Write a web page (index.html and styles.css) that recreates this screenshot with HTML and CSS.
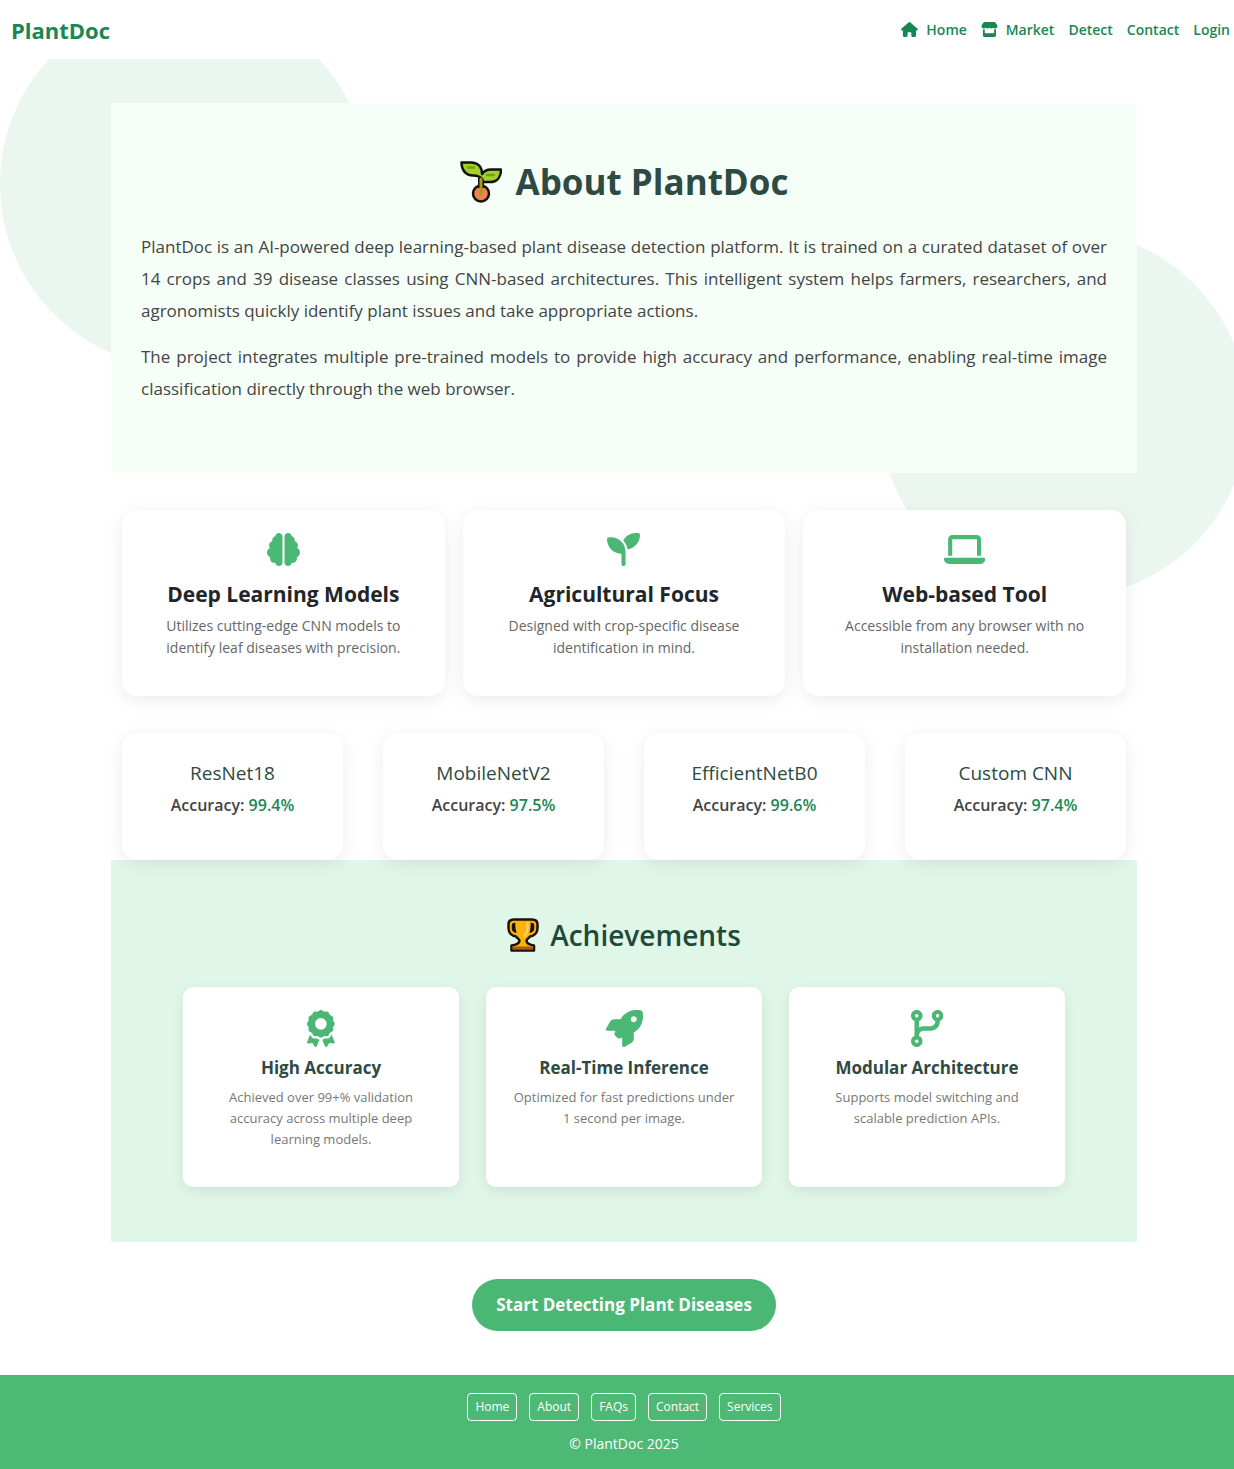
FILE: index.html
```html
<!DOCTYPE html>
<html lang="en">
<head>
<meta charset="utf-8">
<meta name="viewport" content="width=device-width, initial-scale=1">
<title>About - PlantDoc</title>
<link rel="stylesheet" href="styles.css">
</head>
<body>
<div class="blob blob-left"></div>
<div class="blob blob-right"></div>

<header class="navbar">
  <a class="brand" href="#">PlantDoc</a>
  <nav class="nav-links" aria-label="Main">
    <a href="#"><svg class="nav-icon" viewBox="0 0 576 512" aria-hidden="true"><path d="M575.8 255.5c0 18-15 32.1-32 32.1h-32l.7 160.2c0 2.7-.2 5.4-.5 8.1V472c0 22.1-17.9 40-40 40H456c-1.1 0-2.2 0-3.3-.1c-1.4 .1-2.8 .1-4.2 .1H416 392c-22.1 0-40-17.9-40-40V448 384c0-17.7-14.3-32-32-32H256c-17.7 0-32 14.3-32 32v64 24c0 22.1-17.9 40-40 40H160 128.1c-1.5 0-3-.1-4.5-.2c-1.2 .1-2.4 .2-3.6 .2H104c-22.1 0-40-17.9-40-40V360c0-.9 0-1.9 .1-2.8V287.6H32c-18 0-32-14-32-32.1c0-9 3-17 10-24L266.4 8c7-7 15-8 22-8s15 2 21 7L564.8 231.5c8 7 12 15 11 24z"/></svg>Home</a>
    <a href="#"><svg class="nav-icon" viewBox="0 0 576 512" aria-hidden="true"><path d="M547.6 103.8L490.3 13.1C485.2 5 476.1 0 466.4 0H109.6C99.9 0 90.8 5 85.7 13.1L28.3 103.8c-29.6 46.8-3.4 111.9 51.9 119.4c4 .5 8.1 .8 12.1 .8c26.1 0 49.3-11.4 65.2-29c15.9 17.6 39.1 29 65.2 29c26.1 0 49.3-11.4 65.2-29c15.9 17.6 39.1 29 65.2 29c26.2 0 49.3-11.4 65.2-29c16 17.6 39.1 29 65.2 29c4.1 0 8.1-.3 12.1-.8c55.5-7.4 81.8-72.5 52.1-119.4zM499.7 254.9l-.1 0c-5.3 .7-10.7 1.1-16.2 1.1c-12.4 0-24.3-1.9-35.4-5.3V384H128V250.6c-11.2 3.5-23.2 5.4-35.6 5.4c-5.5 0-11-.4-16.3-1.1l-.1 0c-4.1-.6-8.1-1.3-12-2.3V384v64c0 35.3 28.7 64 64 64H448c35.3 0 64-28.7 64-64V384 252.6c-4 1-8 1.8-12.3 2.3z"/></svg>Market</a>
    <a href="#">Detect</a>
    <a href="#">Contact</a>
    <a href="#">Login</a>
  </nav>
</header>

<main class="content">
  <section class="about">
    <h1><svg class="emoji-seedling" viewBox="0 0 42 42" aria-hidden="true">
      <circle cx="21" cy="32.500" r="8" fill="#f0834e" stroke="#111" stroke-width="2.500"/>
      <path d="M21 27V17" stroke="#111" stroke-width="6" fill="none"/>
      <path d="M1.500 1.500H11C18 1.500 22 6 22 13C24 10 27 8.500 31 8.500H41C41 16 37 21 30 21H22.500V18.500C20 15 16 14.500 13 14.500C6 14.500 1.500 9 1.500 1.500Z" fill="#a5cf2a" stroke="#111" stroke-width="2.500" stroke-linejoin="round"/>
      <path d="M21 33V18" stroke="#a99a1e" stroke-width="3" stroke-linecap="round" fill="none"/>
      <path d="M8 6.500H14M27 14H34" stroke="#6ea315" stroke-width="2.500" stroke-linecap="round" fill="none"/>
    </svg>About PlantDoc</h1>
    <p>PlantDoc is an AI-powered deep learning-based plant disease detection platform. It is trained on a curated dataset of over 14 crops and 39 disease classes using CNN-based architectures. This intelligent system helps farmers, researchers, and agronomists quickly identify plant issues and take appropriate actions.</p>
    <p>The project integrates multiple pre-trained models to provide high accuracy and performance, enabling real-time image classification directly through the web browser.</p>
  </section>

  <section class="features">
    <article class="feature-card">
      <svg class="feature-icon" viewBox="0 0 512 512" aria-hidden="true"><path d="M184 0c30.900 0 56 25.100 56 56V456c0 30.900-25.100 56-56 56c-28.900 0-52.700-21.900-55.700-50.100c-5.200 1.400-10.700 2.100-16.300 2.100c-35.300 0-64-28.700-64-64c0-7.400 1.300-14.600 3.600-21.200C21.400 367.400 0 338.200 0 304c0-31.900 18.700-59.500 45.800-72.300C37.100 220.800 32 207 32 192c0-30.700 21.600-56.300 50.400-62.600C80.800 123.900 80 118 80 112c0-29.900 20.600-55.100 48.300-62.100C131.300 21.900 155.100 0 184 0zM328 0c28.900 0 52.600 21.900 55.700 49.900c27.800 7 48.300 32.100 48.300 62.100c0 6-.8 11.900-2.400 17.400c28.800 6.200 50.400 31.900 50.400 62.600c0 15-5.100 28.800-13.800 39.700C493.300 244.500 512 272.100 512 304c0 34.200-21.400 63.400-51.600 74.800c2.300 6.600 3.600 13.800 3.600 21.200c0 35.300-28.700 64-64 64c-5.600 0-11.100-.7-16.300-2.100c-3 28.200-26.800 50.100-55.700 50.100c-30.900 0-56-25.100-56-56V56c0-30.900 25.100-56 56-56z"/></svg>
      <h2>Deep Learning Models</h2>
      <p>Utilizes cutting-edge CNN models to identify leaf diseases with precision.</p>
    </article>
    <article class="feature-card">
      <svg class="feature-icon" viewBox="0 0 512 512" aria-hidden="true"><path d="M512 32c0 113.600-84.600 207.500-194.200 222c-7.100-53.400-30.600-101.600-65.300-139.300C290.800 46.300 364 0 448 0h32c17.700 0 32 14.300 32 32zM0 96C0 78.300 14.300 64 32 64H64c123.700 0 224 100.300 224 224v32V480c0 17.700-14.300 32-32 32s-32-14.300-32-32V320C100.300 320 0 219.700 0 96z"/></svg>
      <h2>Agricultural Focus</h2>
      <p>Designed with crop-specific disease identification in mind.</p>
    </article>
    <article class="feature-card">
      <svg class="feature-icon" viewBox="0 0 640 512" aria-hidden="true"><path d="M128 32C92.700 32 64 60.700 64 96V352h64V96H512V352h64V96c0-35.300-28.700-64-64-64H128zM19.200 384C8.600 384 0 392.600 0 403.200C0 445.600 34.400 480 76.800 480H563.200c42.400 0 76.800-34.400 76.800-76.800c0-10.600-8.600-19.200-19.200-19.200H19.200z"/></svg>
      <h2>Web-based Tool</h2>
      <p>Accessible from any browser with no installation needed.</p>
    </article>
  </section>

  <section class="models">
    <article class="model-card"><h3>ResNet18</h3><p>Accuracy: <strong>99.4%</strong></p></article>
    <article class="model-card"><h3>MobileNetV2</h3><p>Accuracy: <strong>97.5%</strong></p></article>
    <article class="model-card"><h3>EfficientNetB0</h3><p>Accuracy: <strong>99.6%</strong></p></article>
    <article class="model-card"><h3>Custom CNN</h3><p>Accuracy: <strong>97.4%</strong></p></article>
  </section>

  <section class="achievements">
    <h2><svg class="emoji-trophy" viewBox="0 0 32 34" aria-hidden="true">
      <path d="M7 1.500H25C29 1.500 30.500 3.500 30.500 6.500V10C30.500 15 27 18 23 18.500C21.500 20.500 19.500 21.500 19.500 22.500C19.500 25 21 26.500 27 27.500V32.500H4.500V27.500C11 26.500 12.500 25 12.500 22.500C12.500 21.500 10.500 20.500 9 18.500C5 18 1.500 15 1.500 10V6.500C1.500 3.500 3 1.500 7 1.500Z" fill="#fbb10e" stroke="#1b1108" stroke-width="2.500" stroke-linejoin="round"/>
      <path d="M7.500 5.500C6 5.500 5.500 6 5.500 7.500V10C5.500 12 6.500 13.500 8.500 14C7.800 11 7.500 8 7.500 5.500ZM24.500 5.500C26 5.500 26.500 6 26.500 7.500V10C26.500 12 25.500 13.500 23.500 14C24.200 11 24.500 8 24.500 5.500Z" fill="#1b1108" stroke="#1b1108" stroke-width="1.500"/>
      <path d="M20.500 4V11C20.500 14 19.500 16 17 18.500" stroke="#ffd152" stroke-width="2.500" fill="none"/>
      <path d="M5.500 28.500H26V31.500H5.500Z" fill="#a65b1b"/>
    </svg>Achievements</h2>
    <div class="achievement-list">
      <article class="achievement-card">
        <svg class="achievement-icon" viewBox="0 0 384 512" aria-hidden="true"><path d="M173.800 5.500c11-7.300 25.400-7.300 36.400 0L228 17.200c6 3.900 13 5.800 20.100 5.400l21.300-1.300c13.200-.8 25.600 6.400 31.500 18.200l9.600 19.100c3.200 6.400 8.400 11.500 14.700 14.700L344.500 83c11.800 5.900 19 18.300 18.200 31.500l-1.300 21.300c-.4 7.100 1.500 14.200 5.400 20.100l11.800 17.800c7.300 11 7.300 25.400 0 36.400L366.800 228c-3.900 6-5.800 13-5.400 20.100l1.300 21.300c.8 13.200-6.400 25.600-18.200 31.500l-19.100 9.600c-6.400 3.200-11.500 8.400-14.700 14.700L301 344.500c-5.900 11.800-18.300 19-31.500 18.200l-21.300-1.300c-7.100-.4-14.200 1.500-20.100 5.400l-17.800 11.800c-11 7.300-25.400 7.300-36.400 0L156 366.800c-6-3.900-13-5.800-20.100-5.400l-21.300 1.300c-13.200 .8-25.600-6.400-31.500-18.200l-9.600-19.100c-3.200-6.400-8.400-11.500-14.700-14.700L39.500 301c-11.800-5.900-19-18.300-18.200-31.500l1.300-21.300c.4-7.100-1.500-14.200-5.400-20.100L5.500 210.200c-7.300-11-7.300-25.400 0-36.400L17.200 156c3.900-6 5.800-13 5.400-20.100l-1.300-21.300c-.8-13.200 6.400-25.600 18.200-31.500l19.100-9.600C65 70.200 70.200 65 73.400 58.600L83 39.500c5.900-11.800 18.300-19 31.500-18.200l21.300 1.300c7.100 .4 14.200-1.500 20.100-5.400L173.800 5.500zM272 192a80 80 0 1 0 -160 0 80 80 0 1 0 160 0zM1.300 441.800L44.400 339.300c.2 .1 .3 .2 .4 .4l9.600 19.100c11.700 23.200 36 37.300 62 35.800l21.300-1.300c.2 0 .5 0 .7 .2l17.800 11.800c5.100 3.300 10.500 5.900 16.100 7.700l-37.600 89.300c-2.300 5.500-7.400 9.200-13.300 9.700s-11.600-2.200-14.800-7.200L74.400 455.500l-56.100 8.300c-5.700 .8-11.400-1.500-15-6s-4.300-10.700-2.100-16zm248 60.400L211.700 413c5.600-1.800 11-4.300 16.100-7.700l17.800-11.800c.2-.1 .4-.2 .7-.2l21.300 1.300c26 1.500 50.300-12.600 62-35.800l9.600-19.100c.1-.2 .2-.3 .4-.4l43.200 102.500c2.200 5.300 1.400 11.400-2.100 16s-9.300 6.900-15 6l-56.100-8.300-32.200 49.200c-3.200 5-8.900 7.700-14.800 7.200s-11-4.300-13.300-9.700z"/></svg>
        <h3>High Accuracy</h3>
        <p>Achieved over 99+% validation accuracy across multiple deep learning models.</p>
      </article>
      <article class="achievement-card">
        <svg class="achievement-icon" viewBox="0 0 512 512" aria-hidden="true"><path d="M156.600 384.900L125.700 354c-8.500-8.500-11.500-20.800-7.700-32.200c3-8.900 7-20.500 11.800-33.800L24 288c-8.600 0-16.600-4.600-20.900-12.100s-4.200-16.700 .2-24.100l52.500-88.500c13-21.900 36.500-35.300 61.900-35.300l82.300 0c2.400-4 4.800-7.700 7.200-11.300C289.100-4.100 411.100-8.100 483.900 5.300c11.600 2.100 20.600 11.200 22.800 22.800c13.400 72.900 9.300 194.800-111.400 276.700c-3.500 2.400-7.300 4.800-11.300 7.200v82.300c0 25.400-13.400 49-35.300 61.900l-88.500 52.500c-7.400 4.400-16.600 4.500-24.100 .2s-12.100-12.200-12.100-20.900V380.800c-14.100 4.900-26.400 8.900-35.700 11.900c-11.200 3.600-23.400 .5-31.800-7.800zM384 168a40 40 0 1 0 0-80 40 40 0 1 0 0 80z"/></svg>
        <h3>Real-Time Inference</h3>
        <p>Optimized for fast predictions under 1 second per image.</p>
      </article>
      <article class="achievement-card">
        <svg class="achievement-icon" viewBox="0 0 448 512" aria-hidden="true"><path d="M80 104a24 24 0 1 0 0-48 24 24 0 1 0 0 48zm80-24c0 32.800-19.700 61-48 73.300v87.800c18.800-10.900 40.700-17.100 64-17.100h96c35.300 0 64-28.700 64-64v-6.700C307.700 141 288 112.800 288 80c0-44.200 35.800-80 80-80s80 35.800 80 80c0 32.800-19.700 61-48 73.300V160c0 70.700-57.300 128-128 128H176c-35.300 0-64 28.700-64 64v6.700c28.300 12.300 48 40.500 48 73.300c0 44.200-35.800 80-80 80s-80-35.800-80-80c0-32.800 19.700-61 48-73.300V352 153.300C19.700 141 0 112.800 0 80C0 35.800 35.800 0 80 0s80 35.800 80 80zm232 0a24 24 0 1 0 -48 0 24 24 0 1 0 48 0zM80 456a24 24 0 1 0 0-48 24 24 0 1 0 0 48z"/></svg>
        <h3>Modular Architecture</h3>
        <p>Supports model switching and scalable prediction APIs.</p>
      </article>
    </div>
  </section>

  <div class="cta">
    <a class="cta-button" href="#">Start Detecting Plant Diseases</a>
  </div>
</main>

<footer class="footer">
  <nav class="footer-links" aria-label="Footer">
    <a href="#">Home</a>
    <a href="#">About</a>
    <a href="#">FAQs</a>
    <a href="#">Contact</a>
    <a href="#">Services</a>
  </nav>
  <p>© PlantDoc 2025</p>
</footer>
</body>
</html>
```
FILE: styles.css
```css
* {
  box-sizing: border-box;
  margin: 0;
}

body {
  position: relative;
  overflow-x: hidden;
  background: #fff;
  color: #212529;
  font-family: "Open Sans", "Noto Sans", sans-serif;
  font-size: 15px;
  line-height: 22px;
}

a {
  color: inherit;
  text-decoration: none;
}

/* Background circles */
.blob {
  position: absolute;
  z-index: -1;
  width: 368px;
  height: 368px;
  border-radius: 50%;
  background: #ebf6f0;
}

.blob-left {
  top: 0;
  left: 0;
}

.blob-right {
  top: 230px;
  right: -14px;
}

/* Top bar */
.navbar {
  display: flex;
  align-items: center;
  justify-content: space-between;
  height: 59px;
  padding: 0 4px 0 11px;
  background: #fff;
  color: #198754;
}

.brand {
  font-size: 22px;
  font-weight: 700;
  line-height: 32px;
}

.nav-links {
  display: flex;
  gap: 14px;
  font-size: 14px;
  font-weight: 600;
}

.nav-links a {
  display: flex;
  align-items: center;
  gap: 8px;
}

.nav-icon {
  height: 15px;
  fill: currentColor;
}

/* Main column */
.content {
  padding: 44px 97px 44px 111px;
}

.about {
  padding: 54px 30px;
  background: #f5fff8;
}

.about h1 {
  display: flex;
  align-items: center;
  justify-content: center;
  gap: 14px;
  margin-bottom: 24px;
  color: #2d4a43;
  font-size: 35px;
  line-height: 50px;
}

.emoji-seedling {
  width: 42px;
  height: 42px;
}

.about p {
  margin-bottom: 14px;
  color: #444;
  font-size: 17px;
  line-height: 32px;
  text-align: justify;
}

/* Feature cards */
.features {
  display: grid;
  grid-template-columns: repeat(3, 1fr);
  gap: 18px;
  padding: 37px 11px;
}

.feature-card {
  display: flex;
  flex-direction: column;
  align-items: center;
  padding: 23px 28px 37px;
  border-radius: 15px;
  background: #fff;
  box-shadow: 0 4px 18px rgba(0, 0, 0, 0.08);
  text-align: center;
}

.feature-icon {
  height: 33px;
  margin-bottom: 14px;
  fill: #4bb774;
}

.feature-card h2 {
  margin-bottom: 7px;
  font-size: 21px;
  line-height: 28px;
}

.feature-card p {
  color: #666;
  font-size: 14px;
}

/* Model accuracy cards */
.models {
  position: relative;
  display: grid;
  grid-template-columns: repeat(4, 1fr);
  gap: 40px;
  padding: 0 11px;
}

.model-card {
  padding: 28px 16px 44px;
  border-radius: 15px;
  background: #fff;
  box-shadow: 0 4px 18px rgba(0, 0, 0, 0.08);
  text-align: center;
}

.model-card h3 {
  margin-bottom: 9px;
  color: #2d4a43;
  font-size: 19px;
  font-weight: 500;
  line-height: 24px;
}

.model-card p {
  color: #444;
  font-size: 16px;
  font-weight: 600;
}

.model-card strong {
  color: #198754;
  font-weight: 600;
}

/* Achievements */
.achievements {
  padding: 55px 72px;
  background: #e0f6e9;
}

.achievements h2 {
  display: flex;
  align-items: center;
  justify-content: center;
  gap: 11px;
  margin-bottom: 32px;
  color: #1f4a3a;
  font-size: 28px;
  font-weight: 600;
  line-height: 40px;
}

.emoji-trophy {
  width: 32px;
  height: 34px;
}

.achievement-list {
  display: grid;
  grid-template-columns: repeat(3, 1fr);
  gap: 27px;
}

.achievement-card {
  display: flex;
  flex-direction: column;
  align-items: center;
  padding: 23px 23px 37px;
  border-radius: 10px;
  background: #fff;
  box-shadow: 0 4px 14px rgba(0, 0, 0, 0.08);
  text-align: center;
}

.achievement-icon {
  height: 37px;
  margin-bottom: 9px;
  fill: #4bb774;
}

.achievement-card h3 {
  margin-bottom: 7px;
  color: #2d4a43;
  font-size: 17px;
  line-height: 24px;
}

.achievement-card p {
  color: #777;
  font-size: 13px;
  line-height: 21px;
}

/* Call to action */
.cta {
  display: flex;
  justify-content: center;
  padding-top: 37px;
}

.cta-button {
  padding: 14px 24px;
  border-radius: 28px;
  background: #4bb774;
  color: #fff;
  font-size: 17px;
  font-weight: 700;
  line-height: 24px;
}

/* Footer */
.footer {
  display: flex;
  flex-direction: column;
  align-items: center;
  gap: 12px;
  padding: 18px 0 14px 14px;
  background: #4eb875;
  color: #fff;
  font-size: 14px;
}

.footer-links {
  display: flex;
  gap: 12px;
  font-size: 12px;
  line-height: 18px;
}

.footer-links a {
  padding: 4px 7px;
  border: 1px solid #fff;
  border-radius: 4px;
}
```
